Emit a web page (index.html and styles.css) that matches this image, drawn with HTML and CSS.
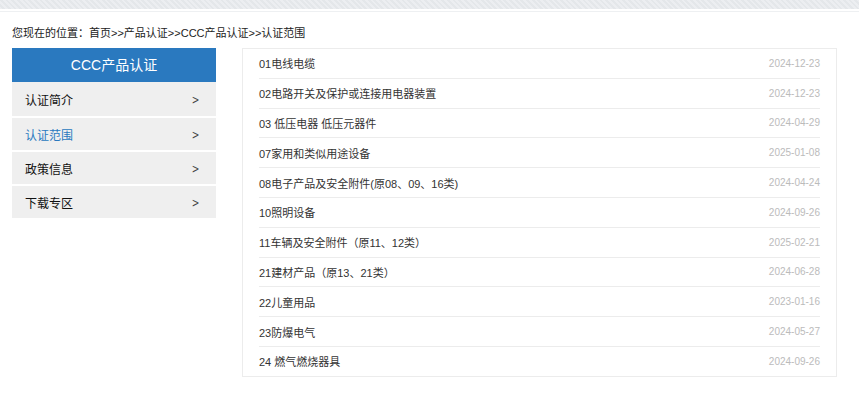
FILE: index.html
```html
<!DOCTYPE html>
<html lang="zh-CN">
<head>
    <meta charset="UTF-8">
    <meta name="viewport" content="width=device-width, initial-scale=1.0">
    <title>认证范围</title>
    <link rel="stylesheet" href="styles.css">
</head>
<body>
    <div class="topbar"></div>
    <div class="topline"></div>

    <div class="crumb">您现在的位置：首页&gt;&gt;产品认证&gt;&gt;CCC产品认证&gt;&gt;认证范围</div>

    <div class="main">
        <div class="side">
            <div class="side-title">CCC产品认证</div>
            <ul class="side-menu">
                <li><span>认证简介</span><i>&gt;</i></li>
                <li class="active"><span>认证范围</span><i>&gt;</i></li>
                <li><span>政策信息</span><i>&gt;</i></li>
                <li><span>下载专区</span><i>&gt;</i></li>
            </ul>
        </div>

        <div class="content">
            <ul class="list">
                <li><span>01电线电缆</span><em>2024-12-23</em></li>
                <li><span>02电路开关及保护或连接用电器装置</span><em>2024-12-23</em></li>
                <li><span>03 低压电器 低压元器件</span><em>2024-04-29</em></li>
                <li><span>07家用和类似用途设备</span><em>2025-01-08</em></li>
                <li><span>08电子产品及安全附件(原08、09、16类)</span><em>2024-04-24</em></li>
                <li><span>10照明设备</span><em>2024-09-26</em></li>
                <li><span>11车辆及安全附件（原11、12类）</span><em>2025-02-21</em></li>
                <li><span>21建材产品（原13、21类）</span><em>2024-06-28</em></li>
                <li><span>22儿童用品</span><em>2023-01-16</em></li>
                <li><span>23防爆电气</span><em>2024-05-27</em></li>
                <li><span>24 燃气燃烧器具</span><em>2024-09-26</em></li>
            </ul>
        </div>
    </div>
</body>
</html>
```

FILE: styles.css
```css
body {
    margin: 0;
    font-family: "Liberation Sans", Arial, "Noto Sans CJK SC", sans-serif;
    color: #333;
    background: #fff;
}
ul {
    list-style: none;
    margin: 0;
    padding: 0;
}
.topbar {
    height: 9px;
    background-color: #e7eaed;
    background-image: repeating-linear-gradient(45deg, #eceef1 0 2px, #e4e7ea 2px 4px);
}
.topline {
    height: 1px;
    margin-top: 2px;
    background: #eef0f2;
}
.crumb {
    font-size: 11px;
    padding: 14px 12px 0;
    height: 22px;
    line-height: 14px;
    color: #222;
}
.main {
    display: flex;
    align-items: flex-start;
    padding: 0 22px 0 12px;
    gap: 26px;
}
.side {
    width: 204px;
    flex-shrink: 0;
}
.side-title {
    height: 34px;
    line-height: 34px;
    background: #2a79bf;
    color: #fff;
    text-align: center;
    font-size: 14px;
}
.side-menu li {
    display: flex;
    justify-content: space-between;
    align-items: center;
    height: 32px;
    margin-top: 2px;
    padding: 0 15px 0 13px;
    background: #efefef;
    font-size: 12px;
    color: #111;
}
.side-menu li:first-child {
    margin-top: 0;
    height: 34px;
}
.side-menu li.active {
    color: #2a79bf;
}
.side-menu i {
    font-style: normal;
    font-family: "DejaVu Sans", sans-serif;
    font-size: 13px;
    color: #444;
    transform: scaleX(0.7);
}
.content {
    flex: 1;
    border: 1px solid #ececec;
    padding: 0 16px 0 16px;
}
.list li {
    display: flex;
    justify-content: space-between;
    align-items: center;
    height: 28.8px;
    border-bottom: 1px solid #ececec;
    font-size: 11px;
}
.list li:last-child {
    border-bottom: none;
}
.list em {
    font-style: normal;
    font-size: 10px;
    color: #bbb;
}
```
